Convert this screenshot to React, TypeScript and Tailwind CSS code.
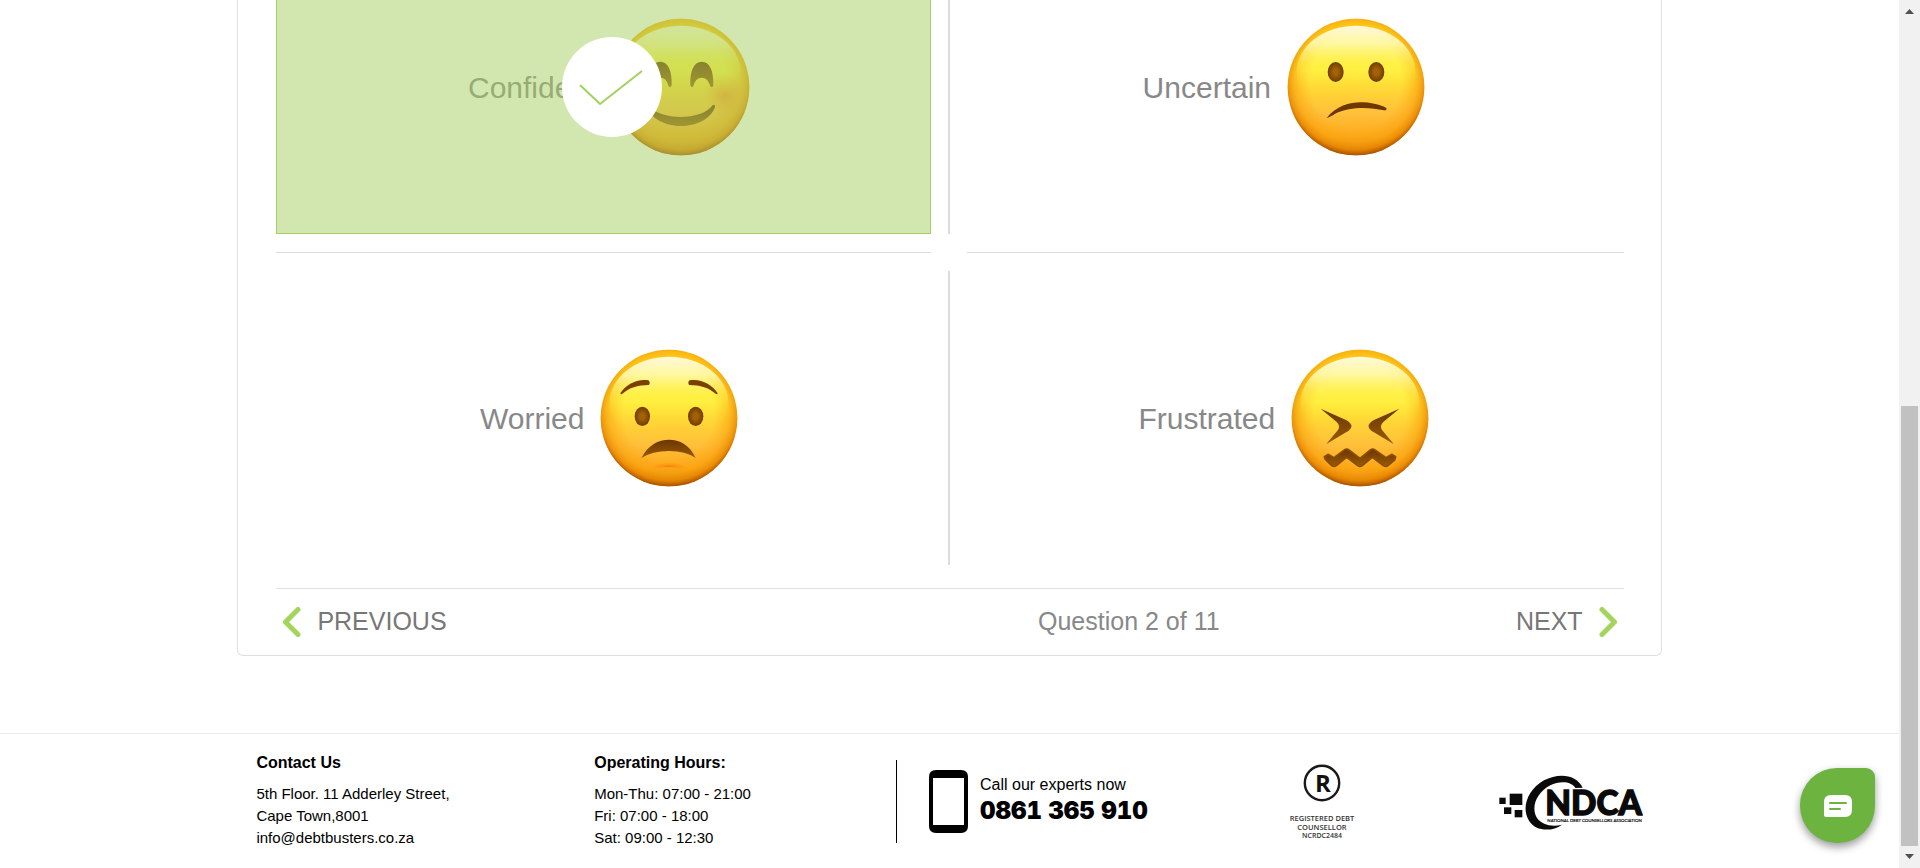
import React, { useState } from "react";

type Mood = "confident" | "uncertain" | "worried" | "frustrated";

const featureFill = "url(#feature)";

function Mirrored({ children }: { children: React.ReactNode }) {
  return (
    <>
      {children}
      <g transform="scale(-1 1)">{children}</g>
    </>
  );
}

function Features({ mood }: { mood: Mood }) {
  if (mood === "confident") {
    return (
      <g fill={featureFill}>
        <Mirrored>
          <circle cx="132" cy="26" r="66" fill="url(#cheek)" />
          <path d="M28 -5C26 -50 40 -76 62 -76C86 -76 98 -50 97 -5Q95 4 88 -2C82 -20 75 -28 62 -28C50 -28 42 -20 37 -2Q31 4 28 -5Z" />
        </Mirrored>
        <path d="M-102 54C-60 102 60 102 95 55Q103 50 102 60C75 136 -75 136 -102 60Z" />
      </g>
    );
  }
  if (mood === "uncertain") {
    return (
      <g>
        <ellipse cx="-61" cy="-45" rx="24" ry="30" fill="url(#eye)" />
        <ellipse cx="61" cy="-45" rx="24" ry="30" fill="url(#eye)" />
        <path fill="#6f3800" d="M-88 93C-58 53 -10 44 22 46C58 48 85 58 92 64Q92 72 84 70C40 59 -20 59 -60 79Q-80 92 -88 93Z" />
      </g>
    );
  }
  if (mood === "worried") {
    return (
      <g>
        <Mirrored>
          <path fill="#7a4000" d="M-146 -74C-130 -100 -95 -119 -62 -113Q-55 -108 -60 -99C-95 -99 -120 -90 -138 -74Q-145 -68 -146 -74Z" />
          <ellipse cx="-80" cy="-5" rx="23" ry="29" fill="url(#eye)" />
        </Mirrored>
        <path fill={featureFill} d="M-83 120C-62 80 -32 65 0 65C32 65 62 80 80 120Q50 99 0 99Q-50 99 -83 120Z" />
        <path fill="url(#chin)" d="M-60 156Q-32 134 0 134Q32 134 60 156Q32 148 0 148Q-32 148 -60 156Z" />
      </g>
    );
  }
  return (
    <g fill={featureFill}>
      <Mirrored>
        <path d="M-118 -28L-42 6Q-14 22 -34 38L-102 79Q-76 48 -66 36Q-58 24 -70 12Z" />
      </Mirrored>
      <path
        stroke="#8a4e00"
        strokeWidth="5"
        strokeLinejoin="round"
        d="M-107 116L-96 109L-78 119L-47 96Q-40 90 -33 96L0 121L31 96Q38 90 45 96L78 119L96 109L107 116L104 126L84 143Q77 148 70 143L37 118L7 143Q0 148 -7 143L-40 118L-71 143Q-78 148 -85 143L-104 124Z"
      />
    </g>
  );
}

function Emoji({ mood }: { mood: Mood }) {
  return (
    <svg aria-hidden="true" viewBox="-225 -225 450 450" className="size-[150px] shrink-0">
      <circle r="205" fill="url(#skin)" />
      <circle r="205" fill="url(#rim)" />
      <ellipse cy="-45" rx="178" ry="139" fill="url(#shine)" />
      <Features mood={mood} />
    </svg>
  );
}

function EmojiPaints() {
  return (
    <svg aria-hidden="true" className="absolute size-0">
      <defs>
        <linearGradient id="skin" x1="0" y1="0" x2="0" y2="1">
          <stop offset="0" stopColor="#ffd21e" />
          <stop offset="0.06" stopColor="#ffe01e" />
          <stop offset="0.38" stopColor="#fff03c" />
          <stop offset="0.52" stopColor="#ffd636" />
          <stop offset="0.7" stopColor="#ffbf3a" />
          <stop offset="0.86" stopColor="#fdab1c" />
          <stop offset="1" stopColor="#d07a08" />
        </linearGradient>
        <radialGradient id="rim" cx="0.5" cy="0.46" r="0.54">
          <stop offset="0.62" stopColor="#ffa412" stopOpacity="0" />
          <stop offset="0.82" stopColor="#f8a00c" stopOpacity="0.55" />
          <stop offset="0.92" stopColor="#e98600" stopOpacity="0.8" />
          <stop offset="1" stopColor="#a85000" />
        </radialGradient>
        <linearGradient id="shine" x1="0" y1="0" x2="0" y2="1">
          <stop offset="0" stopColor="#fffbe4" stopOpacity="0.95" />
          <stop offset="0.2" stopColor="#fffbb4" stopOpacity="0.85" />
          <stop offset="0.42" stopColor="#fff354" stopOpacity="0.45" />
          <stop offset="0.6" stopColor="#ffe53a" stopOpacity="0.1" />
          <stop offset="0.8" stopColor="#ffe23a" stopOpacity="0" />
        </linearGradient>
        <linearGradient id="feature" x1="0" y1="0" x2="0" y2="1">
          <stop offset="0" stopColor="#6b3500" />
          <stop offset="1" stopColor="#9a5c05" />
        </linearGradient>
        <radialGradient id="eye">
          <stop offset="0.3" stopColor="#a26206" />
          <stop offset="1" stopColor="#6f3b00" />
        </radialGradient>
        <radialGradient id="cheek">
          <stop offset="0" stopColor="#ff7a1e" stopOpacity="0.65" />
          <stop offset="1" stopColor="#ff9a1e" stopOpacity="0" />
        </radialGradient>
        <radialGradient id="chin">
          <stop offset="0" stopColor="#f58210" />
          <stop offset="1" stopColor="#ff9c16" stopOpacity="0.2" />
        </radialGradient>
      </defs>
    </svg>
  );
}

function Option({ mood, label, selected, onSelect }: { mood: Mood; label: string; selected: boolean; onSelect: () => void }) {
  return (
    <button
      type="button"
      aria-pressed={selected}
      onClick={onSelect}
      className="relative flex h-[294px] items-center justify-center gap-2.5 text-[30px] text-[#888]"
    >
      <span>{label}</span>
      <Emoji mood={mood} />
      {selected && (
        <>
          <span className="absolute inset-y-0 right-[17px] left-0 border border-[#a5d162] bg-[#a5cf5f]/50" />
          <span className="absolute inset-0 flex items-center justify-center">
            <svg aria-hidden="true" viewBox="0 0 100 100" className="size-[100px] rounded-full bg-white">
              <path d="M18 48L38 67L80 34" fill="none" stroke="#a3d25c" strokeWidth="2" />
            </svg>
          </span>
        </>
      )}
    </button>
  );
}

function Chevron({ direction }: { direction: "left" | "right" }) {
  return (
    <svg aria-hidden="true" viewBox="0 0 20 32" className="h-8 w-5" fill="none" stroke="#a3d45b" strokeWidth="5" strokeLinecap="round" strokeLinejoin="round">
      <path d={direction === "left" ? "M16 3.500L3.500 16L16 28.500" : "M4 3.500L16.500 16L4 28.500"} />
    </svg>
  );
}

function CounsellorLogo() {
  return (
    <svg role="img" aria-label="Registered debt counsellor" viewBox="0 0 72 76" className="h-[76px] w-[72px]">
      <circle cx="36" cy="19" r="17.200" fill="none" stroke="#1a1a1a" strokeWidth="2.400" />
      <g fill="#333" textAnchor="middle" fontFamily="Open Sans, sans-serif" fontWeight="600">
        <text x="37" y="27.500" fontSize="24" fontWeight="700" fill="#111">R</text>
        <text x="36" y="57" fontSize="7.500">REGISTERED DEBT</text>
        <text x="36" y="65.500" fontSize="7.500">COUNSELLOR</text>
        <text x="36" y="74" fontSize="7">NCRDC2484</text>
      </g>
    </svg>
  );
}

function NdcaLogo() {
  return (
    <svg role="img" aria-label="National Debt Counsellors Association" viewBox="55 35 435 174" className="h-[58px] w-[145px]">
      <g fill="#0a0a0a">
        <rect x="59" y="109" width="19" height="19" />
        <rect x="90" y="97" width="38" height="34" />
        <rect x="73" y="138" width="22" height="20" />
        <rect x="105" y="146" width="23" height="22" />
        <path d="M309 79C290 38 236 34 193 57C143 86 124 140 148 178C166 208 214 214 247 190C216 198 186 190 172 170C152 138 172 92 212 72C240 58 276 60 287 80Z" />
        <text x="197" y="161" fontFamily="Lato, sans-serif" fontWeight="900" fontSize="100" stroke="#0a0a0a" strokeWidth="4">NDCA</text>
        <text x="203" y="183" fontFamily="Lato, sans-serif" fontSize="13" stroke="#0a0a0a" strokeWidth="0.500">NATIONAL DEBT COUNSELLORS ASSOCIATION</text>
      </g>
    </svg>
  );
}

function Scrollbar() {
  return (
    <div aria-hidden="true" className="flex w-[21px] shrink-0 flex-col items-center bg-[#f1f1f1]">
      <svg viewBox="0 0 21 22" className="h-[22px] w-[21px]"><path d="M6 14L10.500 9L15 14Z" fill="#505050" /></svg>
      <div className="flex-[384]" />
      <div className="w-[17px] flex-[440] bg-[#c1c1c1]" />
      <svg viewBox="0 0 21 22" className="h-[22px] w-[21px]"><path d="M6 8L10.500 13L15 8Z" fill="#505050" /></svg>
    </div>
  );
}

export default function App() {
  const [mood, setMood] = useState<Mood>("confident");
  const option = (value: Mood, label: string) => (
    <Option mood={value} label={label} selected={mood === value} onSelect={() => setMood(value)} />
  );

  return (
    <div className="flex h-screen overflow-hidden bg-white font-['Liberation_Sans',Arial,sans-serif]">
      <EmojiPaints />
      <div className="min-w-0 flex-1 overflow-hidden">
        <main className="mx-auto -mt-[60px] w-3/4 rounded-b-[6px] border border-t-0 border-[#dfdfe3] pr-[37px] pl-[38px]">
          <div className="grid grid-cols-[672fr_2px_674fr]">
            {option("confident", "Confident")}
            <div className="bg-[#dcdcdc]" />
            {option("uncertain", "Uncertain")}
          </div>
          <div className="grid grid-cols-[655fr_657fr] gap-9 py-[18px]">
            <hr className="border-[#dcdcdc]" />
            <hr className="border-[#dcdcdc]" />
          </div>
          <div className="grid grid-cols-[672fr_2px_674fr]">
            {option("worried", "Worried")}
            <div className="bg-[#dcdcdc]" />
            {option("frustrated", "Frustrated")}
          </div>
          <nav className="mt-[23px] flex h-[67px] items-center border-t border-[#dfdfe3] px-1.5 text-[25px] text-[#777]">
            <div className="flex w-1/2">
              <button type="button" className="flex items-center gap-[15px]">
                <Chevron direction="left" />
                PREVIOUS
              </button>
            </div>
            <p className="pl-[88px] text-[#888]">Question 2 of 11</p>
            <button type="button" className="ml-auto flex items-center gap-[15px]">
              NEXT
              <Chevron direction="right" />
            </button>
          </nav>
        </main>

        <footer className="mt-[77px] border-t border-[#eaeaea] pt-[17px]">
          <div className="mx-auto grid w-3/4 grid-cols-[338fr_302fr_312fr_228fr_207fr] items-start px-[19px] text-[15px] leading-[22px] text-black">
            <section>
              <h2 className="mb-2 text-base font-bold">Contact Us</h2>
              <p>5th Floor. 11 Adderley Street,</p>
              <p>Cape Town,8001</p>
              <a href="mailto:info@debtbusters.co.za">info@debtbusters.co.za</a>
            </section>
            <section>
              <h2 className="mb-2 text-base font-bold">Operating Hours:</h2>
              <p>Mon-Thu: 07:00 - 21:00</p>
              <p>Fri: 07:00 - 18:00</p>
              <p>Sat: 09:00 - 12:30</p>
            </section>
            <section className="mt-[9px] flex h-[83px] items-center gap-3 border-l border-black pl-8">
              <svg aria-hidden="true" viewBox="0 0 39 63" className="h-[63px] w-[39px] shrink-0">
                <path fillRule="evenodd" d="M7 0H32Q39 0 39 7V56Q39 63 32 63H7Q0 63 0 56V7Q0 0 7 0ZM4 8V55H35V8Z" />
              </svg>
              <div>
                <p className="text-base">Call our experts now</p>
                <p className="pb-1.5 font-['Inter'] text-2xl leading-[28px] font-black tabular-nums">0861 365 910</p>
              </div>
            </section>
            <div className="mt-[9px] flex h-[83px] items-center justify-center">
              <CounsellorLogo />
            </div>
            <div className="mt-[9px] flex h-[83px] items-center justify-end">
              <NdcaLogo />
            </div>
          </div>
        </footer>
      </div>
      <Scrollbar />
      <button
        type="button"
        aria-label="Open chat"
        className="fixed right-[45px] bottom-[25px] flex size-[75px] items-center justify-center rounded-[37px] rounded-tr-[9px] bg-[#6cb33f] shadow-[0_4px_8px_rgba(0,0,0,0.4)]"
      >
        <svg aria-hidden="true" viewBox="0 0 28 22" className="h-[22px] w-7">
          <path fill="#fff" d="M7 0H21Q28 0 28 7V15Q28 22 21 22H2Q0 22 0 20V7Q0 0 7 0Z" />
          <path stroke="#6cb33f" strokeWidth="2" strokeLinecap="round" d="M6 8H22M6 14H16" />
        </svg>
      </button>
    </div>
  );
}
